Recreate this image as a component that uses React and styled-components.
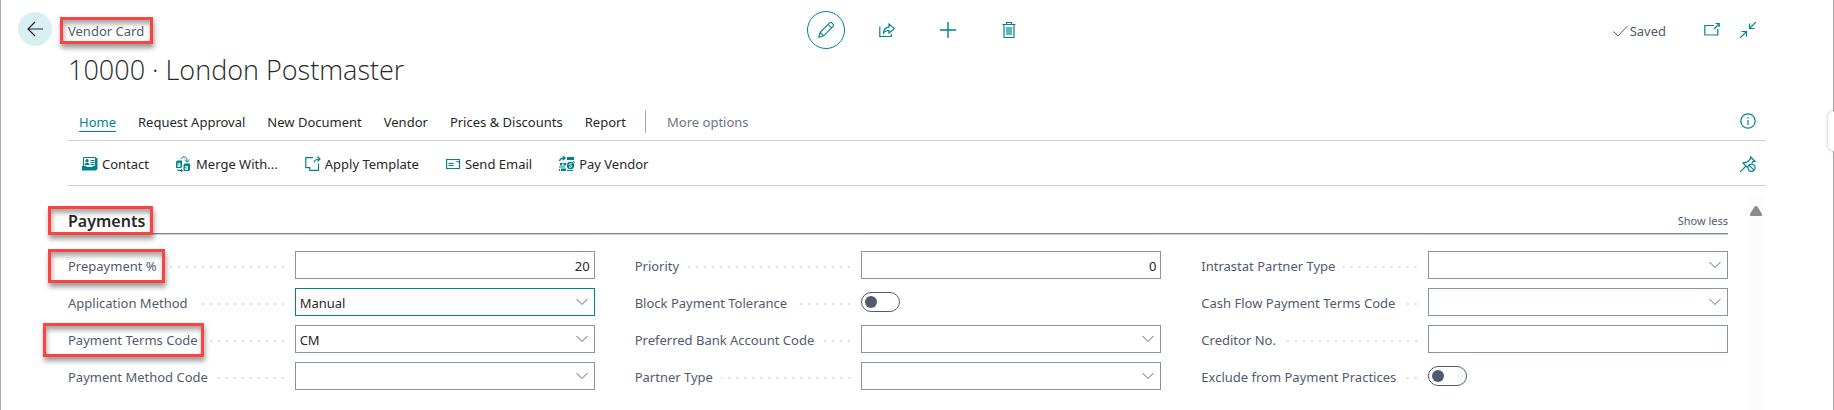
import React from 'react';
import styled, { createGlobalStyle, css } from 'styled-components';

const teal = '#00838a';
const slate = '#505c6d';
const ink = '#292827';
const outline = '#8a93a0';

const GlobalStyle = createGlobalStyle`
  *, *::before, *::after { box-sizing: border-box; }
  body {
    margin: 0;
    background: #fff;
    color: ${ink};
    font-family: 'Segoe UI', 'Noto Sans', 'Open Sans', sans-serif;
    font-size: 13px;
    line-height: 20px;
  }
  button, input, select { font: inherit; color: inherit; }
`;

const Window = styled.div`
  position: relative;
  min-height: 100vh;
  overflow: hidden;
  border-left: 1px solid #adadad;
  &::before {
    content: '';
    position: absolute;
    inset: 0 0 0 auto;
    width: 1px;
    background: #a3a3a3;
  }
`;

const Page = styled.main`
  padding: 0 68px 0 67px;
`;

const Highlight = styled.span`
  position: relative;
  &::after {
    content: '';
    position: absolute;
    inset: ${(p) => p.$inset};
    border: 3px solid #fd4242;
    box-shadow: 1px 4px 5px rgba(0, 0, 0, 0.4), inset 1px 4px 5px rgba(0, 0, 0, 0.35);
    pointer-events: none;
  }
`;

const PlainButton = styled.button`
  display: inline-flex;
  align-items: center;
  justify-content: center;
  padding: 0;
  border: 0;
  background: none;
  cursor: pointer;
  white-space: nowrap;
`;

const IconButton = styled(PlainButton)`
  width: 38px;
  height: 38px;
  color: ${teal};
  border-radius: 50%;
  ${(p) => p.$ringed && css`border: 1px solid ${teal};`}
`;

const BackButton = styled(PlainButton)`
  position: absolute;
  left: 17px;
  top: 12px;
  width: 34px;
  height: 34px;
  border-radius: 50%;
  background: #d9f0f2;
`;

const TopBar = styled.header`
  display: grid;
  grid-template-columns: 1fr auto 1fr;
  align-items: center;
  height: 50px;
  padding-top: 10px;
`;

const Crumb = styled.div`
  padding-top: 2px;
  color: ${slate};
`;

const Tools = styled.div`
  display: flex;
  gap: 23px;
`;

const Status = styled.div`
  display: flex;
  align-items: center;
  justify-content: flex-end;
  color: ${slate};
`;

const Saved = styled.span`
  display: flex;
  align-items: center;
  gap: 2px;
  margin-right: 28px;
  padding-top: 2px;
`;

const StatusButton = styled(IconButton)`
  width: 36px;
`;

const Title = styled.h1`
  margin: 0;
  font-family: 'Segoe UI', 'Open Sans', 'Noto Sans', sans-serif;
  font-size: 27px;
  line-height: 40px;
  font-weight: 300;
`;

const Bar = styled.div`
  display: flex;
  align-items: center;
  justify-content: space-between;
  height: ${(p) => p.$height};
  padding: ${(p) => p.$top} 10px 0 ${(p) => p.$left};
  border-bottom: 1px solid #ced0d4;
`;

const Tabs = styled.nav`
  display: flex;
  align-items: center;
  gap: 22px;
`;

const Tab = styled(PlainButton)`
  height: 20px;
  margin-top: 2px;
  border-bottom: 1px solid ${(p) => (p.$active ? teal : 'transparent')};
  color: ${(p) => (p.$active ? teal : p.$muted ? '#6b7685' : ink)};
`;

const Divider = styled.span`
  width: 1px;
  height: 23px;
  margin: 0 -1px 0 -3px;
  background: #a5acb8;
`;

const Actions = styled.div`
  display: flex;
  gap: 27px;
`;

const Action = styled(PlainButton)`
  gap: 4px;
  svg { color: ${teal}; }
`;

const SideIcon = styled(PlainButton)`
  color: ${teal};
`;

const Body = styled.div`
  display: flex;
  align-items: stretch;
  padding-top: 10px;
  height: 224px;
`;

const Section = styled.section`
  flex: 1;
`;

const SectionHead = styled.div`
  display: flex;
  align-items: center;
  justify-content: space-between;
  height: 38px;
  padding-top: 12px;
  border-bottom: 1px solid #7b8594;
  box-shadow: 0 1px 0 #cdd2d9;
`;

const SectionTitle = styled.h2`
  margin: 0;
  font-size: 16px;
  line-height: 24px;
  font-weight: 600;
`;

const ShowLess = styled(PlainButton)`
  font-size: 11px;
  color: ${slate};
`;

const Columns = styled.div`
  display: grid;
  grid-template-columns: repeat(3, 1fr);
  gap: 40px;
  padding-top: 17px;
`;

const Column = styled.div`
  display: flex;
  flex-direction: column;
  gap: 9px;
`;

const Field = styled.div`
  display: grid;
  grid-template-columns: 34fr 45fr;
  align-items: center;
  height: 28px;
`;

const LabelCell = styled.div`
  display: flex;
  align-items: center;
  padding: 1px 11px 0 0;
  color: ${slate};
  white-space: nowrap;
`;

const Leader = styled.span`
  flex: 1;
  height: 2px;
  margin: 2px 0 0 8px;
  background: linear-gradient(to left, #dadbdd 2px, transparent 2px) right / 8px 2px repeat-x;
`;

const Control = styled.div`
  position: relative;
  display: flex;
  align-items: center;
  height: 28px;
  svg {
    position: absolute;
    right: 7px;
    pointer-events: none;
  }
`;

const box = css`
  width: 100%;
  height: 28px;
  padding: 2px 4px 0;
  border: 1px solid ${(p) => (p.$focused ? teal : outline)};
  border-radius: 0;
  outline: none;
  background: #fff;
  appearance: none;
`;

const TextBox = styled.input`
  ${box}
  text-align: ${(p) => (p.$numeric ? 'right' : 'left')};
`;

const Select = styled.select`
  ${box}
  padding: 2px 24px 0 4px;
`;

const Toggle = styled.input`
  appearance: none;
  width: 39px;
  height: 20px;
  margin: 0;
  padding: 3px;
  border: 1px solid ${slate};
  border-radius: 10px;
  &::before {
    content: '';
    display: block;
    width: 12px;
    height: 12px;
    border-radius: 50%;
    background: ${slate};
  }
  &:checked::before { margin-left: auto; }
`;

const ScrollTrack = styled.div`
  width: 20px;
  margin-left: 18px;
  padding-top: 9px;
  background: #fcfcfc;
  display: flex;
  justify-content: center;
`;

const PaneHandle = styled.div`
  position: absolute;
  right: -9px;
  top: 111px;
  width: 16px;
  height: 40px;
  border: 1px solid #e3e5e9;
  border-radius: 6px;
  background: #fff;
  box-shadow: 0 0 4px rgba(0, 0, 0, 0.12);
`;

const Svg = ({ w = 16, h = 16, children, ...rest }) => (
  <svg width={w} height={h} viewBox={`0 0 ${w} ${h}`} fill="none" stroke="currentColor" strokeWidth="1" aria-hidden="true" {...rest}>
    {children}
  </svg>
);

const ArrowLeft = () => <Svg strokeWidth="1.2"><path d="M16 8H1M8 1L1 8l7 7" /></Svg>;
const Pencil = () => (
  <Svg strokeWidth="1.1">
    <path d="M.8 15.2l1.4-4.8L11.4 1.2a2 2 0 0 1 2.8 0l.6.6a2 2 0 0 1 0 2.8L5.6 13.8zM2.2 10.4l3.4 3.4M10.2 2.4l3.4 3.4" />
  </Svg>
);
const Share = () => (
  <Svg strokeWidth="1.2">
    <path d="M.8 4.5v10h11.5v-2.5M4.500 11c.3-3.700 2-5.500 5.500-5.800V2l5.300 4.600L10 11V8.300C7.300 8.300 6 9 4.500 11z" />
  </Svg>
);
const Plus = () => <Svg strokeWidth="1.4"><path d="M8 0v16M0 8h16" /></Svg>;
const Trash = () => (
  <Svg w={14} strokeWidth="1.2">
    <path d="M.5 2.5h13M4.5 2.5v-2h5v2M2 2.5v13h10v-13M5 5v8M7 5v8M9 5v8" />
  </Svg>
);
const Check = () => <Svg w={15} h={12}><path d="M.5 6.5l4.5 4.5L14.5 1" /></Svg>;
const PopOut = () => <Svg strokeWidth="1.2"><path d="M10 3.5H.8v9.5h13V7M10 7l5-5M11.5 1.5H15.2V5" /></Svg>;
const Collapse = () => (
  <Svg strokeWidth="1.2"><path d="M16 0L9.5 6.5M9.5 1.5v5h5M0 16l6.5-6.5M1.5 9.5h5v5" /></Svg>
);
const Info = () => (
  <Svg strokeWidth="1.2"><circle cx="8" cy="8" r="7.2" /><path d="M8 7v5M8 4v1.5" /></Svg>
);
const Unpin = () => (
  <Svg strokeWidth="1.2">
    <path d="M0 16l6-6M2.5 6.5l5 5M3 7c2-1 3.5-.5 4-.8L10.5 3V.8L15 5.4h-2L12 7" />
    <circle cx="11.5" cy="11.7" r="3.6" /><path d="M9 9.2l5 5" />
  </Svg>
);
const ContactIcon = () => (
  <Svg>
    <path d="M1.5 10V1.5h12V10" />
    <path d="M0 10h4l1 1h5l1-1h3V2h1.5v11L14 14.5H0z" fill="currentColor" stroke="none" />
    <circle cx="5" cy="4.8" r="1.7" fill="currentColor" stroke="none" />
    <path d="M2.5 9c0-3 5-3 5 0z" fill="currentColor" stroke="none" />
    <path d="M8.5 4.5h4M8.5 6.5h4M8.5 8.5h4" />
  </Svg>
);
const MergeIcon = () => (
  <Svg>
    <path d="M1 4.5h5V11l-1 1H0V6zM8.5 7.5H14V14l-1 1H7.5V9z" fill="currentColor" stroke="none" />
    <path d="M1.5 7.5h2.5v3H1.8V9H4M9 10.5h2.5v3H9.3V12h2.2" stroke="#fff" />
    <path d="M5 3C6 .3 10 .3 11 3V6M8.5 3.800L11 6.2l2.5-2.4M2 13v1.5h4M5 13l1.5 1.5L5 16" />
  </Svg>
);
const TemplateIcon = () => (
  <Svg strokeWidth="1.2">
    <path d="M8 1.7H.8v10h4v2.7h8.7V7.5M9 6.5C9.5 4 11 3 15 3M12.5.5L15 3l-2.5 2.5" />
  </Svg>
);
const MailIcon = () => (
  <Svg w={15} h={16}><path d="M.6 3.5h12.9v9H.6zM2.5 7.5h5M2.5 9.5h5M10.5 5.5h1.5v1" strokeWidth="1.2" /></Svg>
);
const PayIcon = () => (
  <Svg>
    <path d="M.5 5C1 2.5 3 2 6 2M4 0l2 2-2 2" strokeWidth="1.4" />
    <path d="M8 1h7v3H8zM1 7h6v2.5H1zM2 12.5h5V15H2z" fill="currentColor" stroke="none" />
    <circle cx="11.5" cy="9.5" r="3.7" fill="currentColor" stroke="none" />
    <path d="M13 8c-3-1-3.5 1-1.5 1.5s1.5 2.5-1.5 1.5M3 8.3h2" stroke="#fff" />
    <path d="M14.5 5l1 2M8 14.5h6M0 11h6M.5 13v2" />
  </Svg>
);
const Chevron = () => <Svg w={12} h={8} stroke="#5d6673"><path d="M.5 1L6 6.5 11.5 1" /></Svg>;
const ScrollUp = () => (
  <Svg w={12} h={12} stroke="none"><path d="M6 1q1 0 1.7 1L12 9q.3 2-1 2H1Q-.3 11 0 9l4.3-7Q5 1 6 1z" fill="#8b8b8b" /></Svg>
);

const tabs = ['Home', 'Request Approval', 'New Document', 'Vendor', 'Prices & Discounts', 'Report'];

const actions = [
  ['Contact', ContactIcon],
  ['Merge With...', MergeIcon],
  ['Apply Template', TemplateIcon],
  ['Send Email', MailIcon],
  ['Pay Vendor', PayIcon],
];

const columns = [
  [
    { label: 'Prepayment %', kind: 'number', value: '20', mark: '-8px -8px -8px -20px' },
    { label: 'Application Method', kind: 'select', value: 'Manual', focused: true },
    { label: 'Payment Terms Code', kind: 'select', value: 'CM', mark: '-8px -6px -8px -25px' },
    { label: 'Payment Method Code', kind: 'select', value: '' },
  ],
  [
    { label: 'Priority', kind: 'number', value: '0' },
    { label: 'Block Payment Tolerance', kind: 'toggle' },
    { label: 'Preferred Bank Account Code', kind: 'select', value: '' },
    { label: 'Partner Type', kind: 'select', value: '' },
  ],
  [
    { label: 'Intrastat Partner Type', kind: 'select', value: '' },
    { label: 'Cash Flow Payment Terms Code', kind: 'select', value: '' },
    { label: 'Creditor No.', kind: 'text', value: '' },
    { label: 'Exclude from Payment Practices', kind: 'toggle' },
  ],
];

function FormField({ label, kind, value, focused, mark }) {
  const id = label.toLowerCase().replace(/[^a-z]+/g, '-');
  return (
    <Field>
      <LabelCell>
        <label htmlFor={id}>{mark ? <Highlight $inset={mark}>{label}</Highlight> : label}</label>
        <Leader />
      </LabelCell>
      <Control>
        {kind === 'toggle' && <Toggle id={id} type="checkbox" role="switch" />}
        {kind === 'select' && (
          <>
            <Select id={id} defaultValue={value} $focused={focused}>
              <option>{value}</option>
            </Select>
            <Chevron />
          </>
        )}
        {(kind === 'number' || kind === 'text') && (
          <TextBox id={id} type="text" defaultValue={value} $numeric={kind === 'number'} />
        )}
      </Control>
    </Field>
  );
}

export default function App() {
  return (
    <>
      <GlobalStyle />
      <Window>
        <BackButton aria-label="Back"><ArrowLeft /></BackButton>
        <Page>
          <TopBar>
            <Crumb><Highlight $inset="-5px -9px -4px -8px">Vendor Card</Highlight></Crumb>
            <Tools>
              <IconButton aria-label="Edit" $ringed><Pencil /></IconButton>
              <IconButton aria-label="Share"><Share /></IconButton>
              <IconButton aria-label="New"><Plus /></IconButton>
              <IconButton aria-label="Delete"><Trash /></IconButton>
            </Tools>
            <Status>
              <Saved><Check />Saved</Saved>
              <StatusButton aria-label="Open in new window"><PopOut /></StatusButton>
              <StatusButton aria-label="Collapse"><Collapse /></StatusButton>
            </Status>
          </TopBar>
          <Title>10000 · London Postmaster</Title>
          <Bar $height="51px" $top="12px" $left="11px">
            <Tabs>
              {tabs.map((t, i) => <Tab key={t} $active={i === 0}>{t}</Tab>)}
              <Divider />
              <Tab $muted>More options</Tab>
            </Tabs>
            <SideIcon aria-label="Details"><Info /></SideIcon>
          </Bar>
          <Bar $height="45px" $top="1px" $left="14px">
            <Actions>
              {actions.map(([name, Icon]) => <Action key={name}><Icon />{name}</Action>)}
            </Actions>
            <SideIcon aria-label="Unpin"><Unpin /></SideIcon>
          </Bar>
          <Body>
            <Section>
              <SectionHead>
                <SectionTitle><Highlight $inset="-4px -8px -3px -20px">Payments</Highlight></SectionTitle>
                <ShowLess>Show less</ShowLess>
              </SectionHead>
              <Columns>
                {columns.map((fields, i) => (
                  <Column key={i}>{fields.map((f) => <FormField key={f.label} {...f} />)}</Column>
                ))}
              </Columns>
            </Section>
            <ScrollTrack><ScrollUp /></ScrollTrack>
          </Body>
        </Page>
        <PaneHandle />
      </Window>
    </>
  );
}
